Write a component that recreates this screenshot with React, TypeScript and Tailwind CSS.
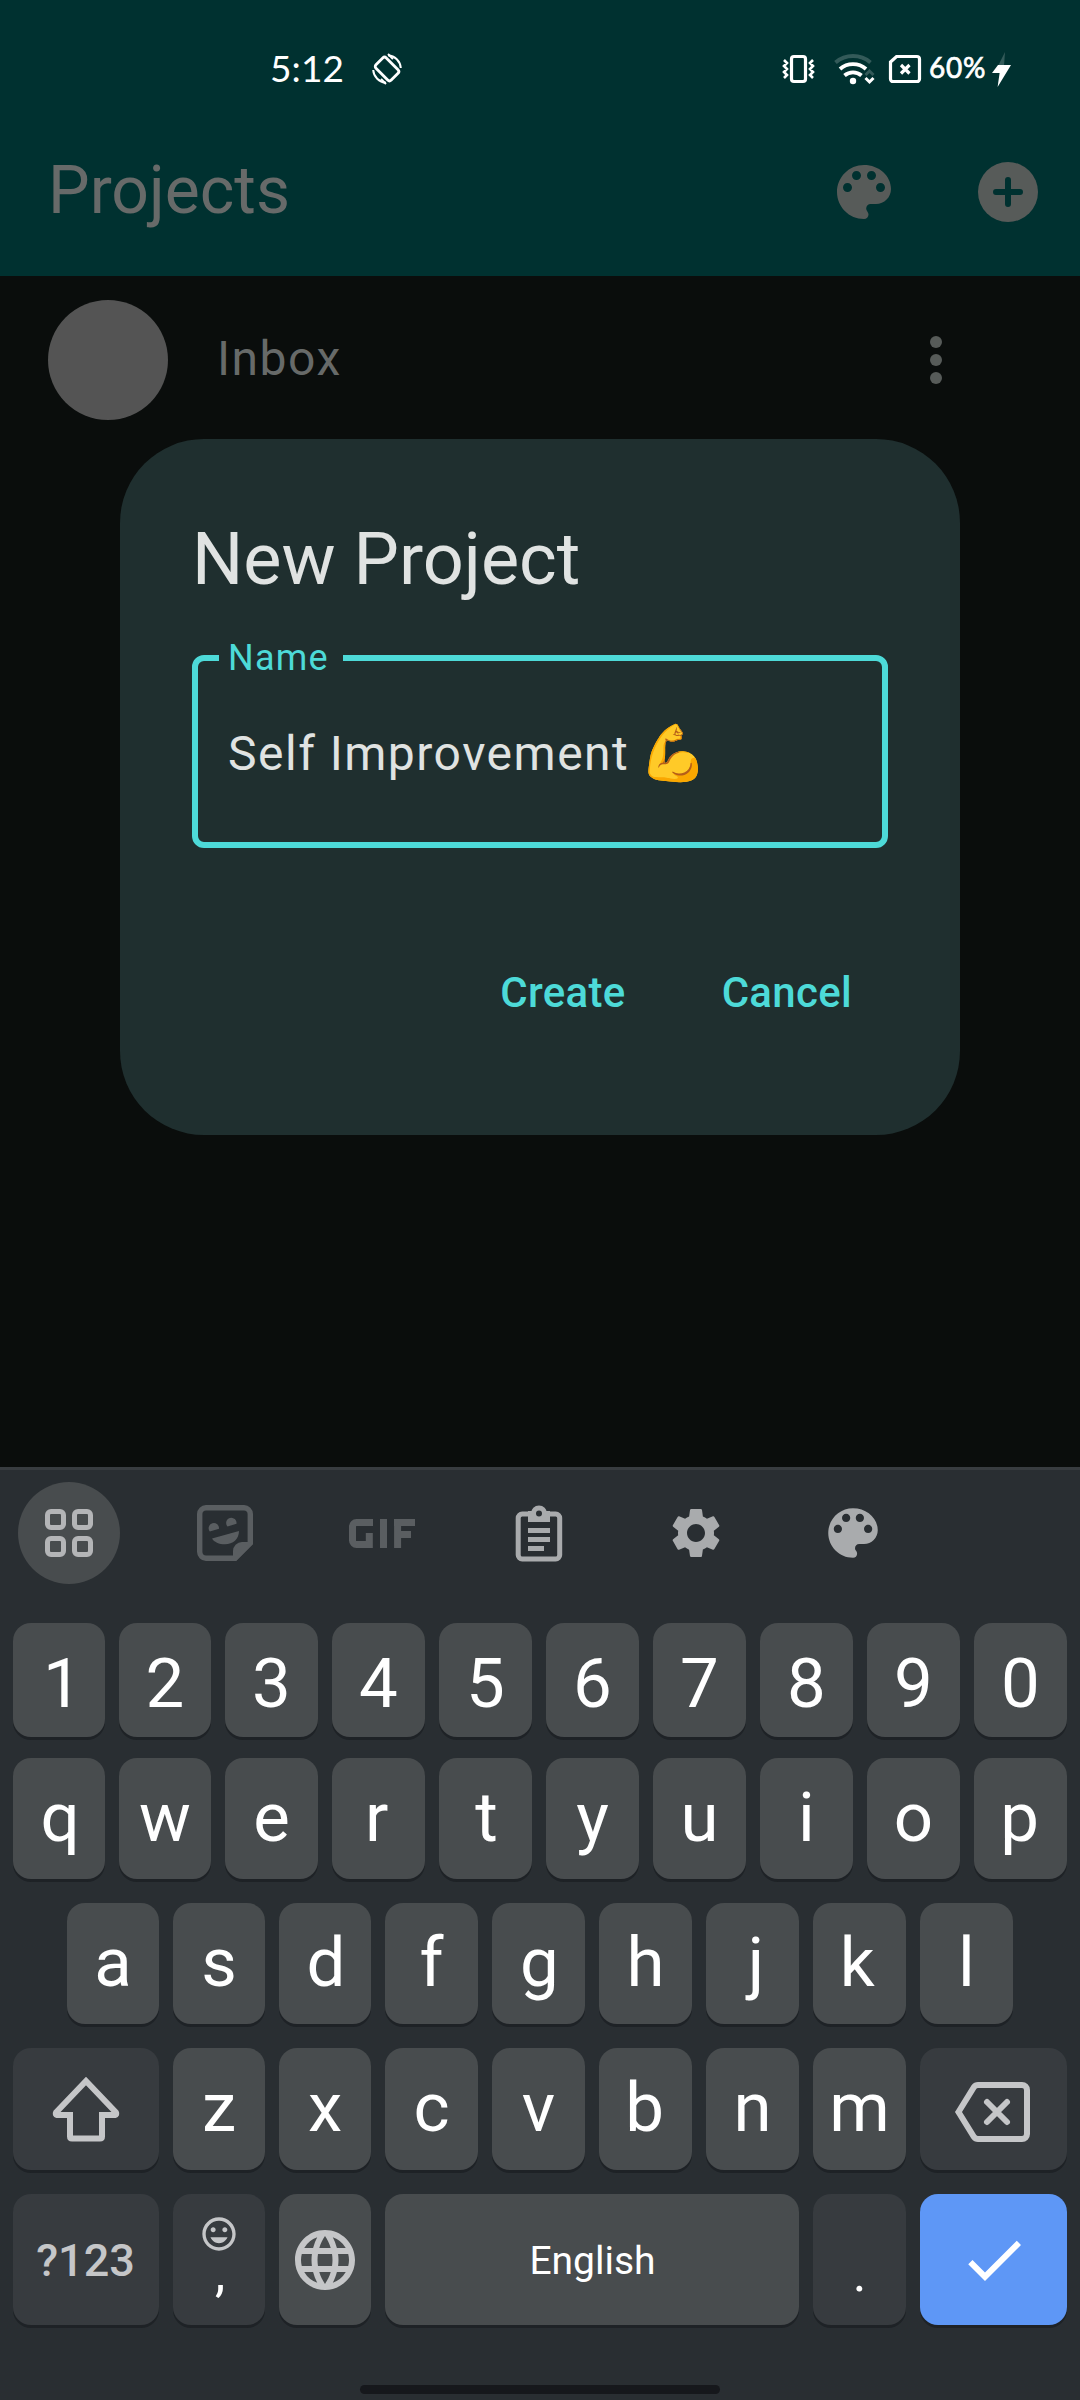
import React from "react";
import { MdSettings, MdLanguage, MdOutlineTagFaces, MdCheck } from "react-icons/md";

function Palette({ className }: { className: string }) {
  return (
    <svg className={className} viewBox="0 0 24 24" fill="currentColor">
      <path d="M12 3c-4.970 0-9 4.030-9 9s4.030 9 9 9c.83 0 1.500-.67 1.500-1.500 0-.39-.15-.74-.39-1.010-.23-.26-.38-.61-.38-.99 0-.83.67-1.500 1.500-1.500H16c2.760 0 5-2.240 5-5 0-4.420-4.030-8-9-8zm-5.500 9c-.83 0-1.500-.67-1.500-1.500S5.670 9 6.500 9 8 9.670 8 10.500 7.330 12 6.500 12zm3-4C8.670 8 8 7.330 8 6.500S8.670 5 9.500 5s1.500.67 1.500 1.500S10.330 8 9.500 8zm5 0c-.83 0-1.500-.67-1.500-1.500S13.670 5 14.500 5s1.500.67 1.500 1.500S15.330 8 14.500 8zm3 4c-.83 0-1.500-.67-1.500-1.500S16.670 9 17.500 9s1.500.67 1.500 1.500-.67 1.500-1.500 1.500z" />
    </svg>
  );
}

function StatusBar() {
  return (
    <div className="relative h-[138px] w-full text-white">
      <span className="absolute left-[270px] top-[45px] text-[37px] leading-[46px] tracking-[0.100px] font-[Lato,sans-serif]">5:12</span>
      <svg className="absolute left-[371px] top-[53px]" width="32" height="32" viewBox="0 0 32 32" fill="none" stroke="currentColor" strokeWidth="2.800">
        <rect x="8.700" y="5.200" width="14.600" height="21.600" rx="2.500" transform="rotate(-45 16 16)" />
        <path d="M17 2.200A13.800 13.800 0 0 1 29.800 15M15 29.800A13.800 13.800 0 0 1 2.200 17" strokeWidth="2" />
        <path d="M17 1l5 5M15 31l-5-5" strokeWidth="2" />
      </svg>
      <svg className="absolute left-[780px] top-[50px]" width="236" height="40" viewBox="780 50 236 40" fill="none" stroke="currentColor">
        <rect x="791.500" y="56.500" width="14" height="25" rx="2.500" strokeWidth="3.200" />
        <path d="M784 60l3 3-3 3 3 3-3 3 3 3-3 3M813 60l-3 3 3 3-3 3 3 3-3 3 3 3" strokeWidth="2.600" />
        <path d="M835.500 62.500a27 27 0 0 1 35 0" strokeWidth="4" opacity="0.200" />
        <path d="M840 69a19.500 19.500 0 0 1 26 0M844.500 75.500a13 13 0 0 1 17 0" strokeWidth="3.800" />
        <circle cx="853" cy="81" r="3.200" fill="currentColor" stroke="none" />
        <path d="M865.500 75l4-4 4 4" strokeWidth="3" opacity="0.200" />
        <path d="M865.500 78l4 4 4-4" strokeWidth="3" />
        <path d="M896.500 56.500H917a2.500 2.500 0 0 1 2.500 2.500V79a2.500 2.500 0 0 1-2.500 2.500H893a2.500 2.500 0 0 1-2.500-2.500V62z" strokeWidth="3.200" />
        <path d="M901 65l8.500 8.500M909.500 65L901 73.500" strokeWidth="3.200" />
        <path d="M1005 52l-7 14h6z" fill="currentColor" stroke="none" opacity="0.200" />
        <path d="M998 65H1011L997.600 87l2-14H992z" fill="currentColor" stroke="none" />
      </svg>
      <span className="absolute left-[929px] top-[49px] text-[28px] leading-[36px] tracking-[0.700px] font-[Lato,sans-serif] [-webkit-text-stroke:0.700px_white]">60%</span>
    </div>
  );
}

const KEY = "flex shrink-0 items-center justify-center rounded-[18px] shadow-[0_3px_0_#1e2226] ";
const LIGHT = "bg-[#484c4e] ";
const DARK = "bg-[#373b3f] ";

// Glyphs with uneven side bearings are nudged so that their ink is centred on the key.
const NUDGE: Record<string, number> = { "1": 3.5, q: 1.2, r: -1.9, t: 1, p: -0.8, d: 1, g: 0.9, j: 3.6, k: -2.3, b: -0.8 };

function LetterRow({ letters, narrow, height, pad }: { letters: string; narrow: number; height: string; pad: string }) {
  return (
    <>
      {letters.split("").map((c, i) => (
        <div key={c} className={KEY + LIGHT + height + (i < narrow ? " w-[92px]" : " w-[93px]")}>
          <span className={"text-[69px] leading-[80px] " + pad} style={{ transform: `translateX(${NUDGE[c] ?? 0}px)` }}>
            {c}
          </span>
        </div>
      ))}
    </>
  );
}

function Toolbar() {
  return (
    <div className="flex h-[126px] items-center pl-[18px]">
      <div className="flex size-[102px] items-center justify-center rounded-full bg-[#484c4e]">
        <div className="grid grid-cols-2 gap-[6px]">
          {[0, 1, 2, 3].map((i) => (
            <div key={i} className="size-[21px] rounded-[6px] border-[5px] border-[#b4b5b7]" />
          ))}
        </div>
      </div>
      <svg className="ml-[77px]" width="56" height="56" viewBox="0 0 56 56" fill="#5a5e61">
        <path d="M38 53.300H9a6.500 6.500 0 0 1-6.300-6.500V9A6.500 6.500 0 0 1 9 2.700H47A6.500 6.500 0 0 1 53.300 9V38z" fill="none" stroke="#5a5e61" strokeWidth="5.400" />
        <path d="M36 56V46a9 9 0 0 1 9-9h11v2L39 56z" />
        <path d="M12.800 26.500A5.200 5.200 0 1 1 22 23.800zM30.500 21.500A5.200 5.200 0 1 1 39.500 18.800zM15 33.500L42 26C42 34 36 39.300 28 39.300 22 39.300 17 37 15 33.500z" />
      </svg>
      <svg className="ml-[96px]" width="66" height="29" viewBox="0 0 66 29" fill="none" stroke="#5a5e61" strokeWidth="7">
        <path d="M24 3.500H7.500a4 4 0 0 0-4 4V21.500a4 4 0 0 0 4 4H20.300V14M34.500 0V29M48.600 29V0M45 3.500H66M48.600 15.500H62" />
      </svg>
      <svg className="ml-[100px]" width="48" height="57" viewBox="0 0 48 57" fill="none" stroke="#a9abad" strokeWidth="5">
        <rect x="3.200" y="9" width="41.500" height="45" rx="4" />
        <path d="M13 11.500h22" strokeWidth="11" />
        <circle cx="24" cy="8.500" r="5.500" fill="#292e32" />
        <path d="M13 25.500h22M13 34.500h22M13 43.500h16" />
      </svg>
      <MdSettings className="ml-[103px] size-[60px] text-[#a9abad]" />
      <Palette className="ml-[94px] size-[66px] text-[#a9abad]" />
    </div>
  );
}

function Keyboard() {
  return (
    <div className="flex h-[933px] flex-col border-t-[3px] border-[#383c40] bg-[#292e32] text-white">
      <Toolbar />
      <div className="mt-[27px] flex gap-[14px] pl-[13px]">
        <LetterRow letters="1234567890" narrow={2} height="h-[114px]" pad="pt-[7px]" />
      </div>
      <div className="mt-[21px] flex gap-[14px] pl-[13px]">
        <LetterRow letters="qwertyuiop" narrow={2} height="h-[121px]" pad="pb-[2px]" />
      </div>
      <div className="mt-[24px] flex gap-[14px] pl-[67px]">
        <LetterRow letters="asdfghjkl" narrow={3} height="h-[121px]" pad="pb-[2px]" />
      </div>
      <div className="mt-[24px] flex gap-[14px] pl-[13px]">
        <div className={KEY + DARK + "h-[122px] w-[146px]"}>
          <svg width="70" height="68" viewBox="0 0 70 68" fill="none" stroke="#c5c6c8" strokeWidth="6">
            <path d="M35 6L5 37.500Q4 39.500 6 40H19V61.500q0 2 2 2H49q2 0 2-2V40H64q2-.5 1-2.500z" />
          </svg>
        </div>
        <LetterRow letters="zxcvbnm" narrow={2} height="h-[122px]" pad="pb-[3px]" />
        <div className={KEY + DARK + "h-[122px] w-[147px]"}>
          <svg className="-ml-[4px] mt-[6px]" width="78" height="60" viewBox="0 0 78 60" fill="none" stroke="#c5c6c8" strokeWidth="6">
            <path d="M5.500 30L21 5Q22.500 3 25 3H69a5 5 0 0 1 5 5V52a5 5 0 0 1-5 5H25Q22.500 57 21 55z" />
            <path d="M34 20L54 40M54 20L34 40" strokeLinecap="round" />
          </svg>
        </div>
      </div>
      <div className="mt-[24px] flex gap-[14px] pl-[13px]">
        <div className={KEY + DARK + "h-[131px] w-[146px] pt-[3px] pr-[1px] text-[45px] font-medium text-[#c5c6c8]"}>?123</div>
        <div className={KEY + DARK + "h-[131px] w-[92px] flex-col"}>
          <MdOutlineTagFaces className="mt-[8px] size-[40px] text-[#c5c6c8]" />
          <span className="mb-[10px] -mt-[10px] pl-[2px] text-[52px] leading-[60px]">,</span>
        </div>
        <div className={KEY + LIGHT + "h-[131px] w-[92px]"}>
          <MdLanguage className="size-[72px] text-[#c5c6c8]" />
        </div>
        <div className={KEY + LIGHT + "h-[131px] w-[414px] pl-[1px] pt-[3px] text-[39px]"}>English</div>
        <div className={KEY + DARK + "h-[131px] w-[93px]"}>
          <span className="mt-[28px] text-[52px] leading-[60px]">.</span>
        </div>
        <div className={KEY + "h-[131px] w-[147px] bg-[#5e97f6]"}>
          <MdCheck className="size-[72px]" />
        </div>
      </div>
      <div className="mx-auto mt-[60px] h-[9px] w-[360px] rounded-full bg-[#16181c]" />
    </div>
  );
}

function Dialog() {
  return (
    <div className="absolute left-[120px] top-[439px] h-[696px] w-[840px] rounded-[84px] bg-[#1f2f2f] px-[72px] pt-[79px]">
      <h2 className="text-[72px] leading-[84px] text-[#e0e3e2]">New Project</h2>
      <div className="relative mt-[53px] flex h-[193px] items-center rounded-[12px] border-[6px] border-[#4ddad8] pl-[30px] text-[48px] tracking-[1.500px] text-[#e0e3e2]">
        <span className="absolute -top-[24px] left-[21px] w-[124px] bg-[#1f2f2f] pl-[9px] text-[36px] leading-[42px] tracking-[1.200px] text-[#4ddad8]">Name</span>
        <span className="whitespace-pre pt-[5px] leading-[56px]">Self Improvement </span>
        <span className="-ml-[4px] pt-[3px] text-[55px] leading-[56px] tracking-normal">💪</span>
      </div>
      <div className="mt-[105px] flex justify-end gap-[96px] pr-[36px] text-[42px] font-medium leading-[80px] tracking-[0.300px] text-[#4ddad8]">
        <span>Create</span>
        <span>Cancel</span>
      </div>
    </div>
  );
}

export default function App() {
  return (
    <div className="relative flex h-[2400px] w-[1080px] flex-col overflow-hidden bg-[#0a0d0c] font-[Roboto,sans-serif]">
      <header className="h-[276px] bg-[#003130]">
        <StatusBar />
        <div className="flex h-[108px] items-center pl-[48px] pr-[36px] text-[#575b59]">
          <h1 className="grow pb-[2px] text-[66px] leading-[78px] text-[#676a69]">Projects</h1>
          <Palette className="size-[72px]" />
          <svg className="ml-[72px]" width="72" height="72" viewBox="0 0 72 72">
            <circle cx="36" cy="36" r="30" fill="currentColor" />
            <path d="M36 24V48M24 36H48" stroke="#003130" strokeWidth="6" strokeLinecap="round" />
          </svg>
        </div>
      </header>
      <div className="flex h-[168px] shrink-0 items-center pl-[48px] pr-[138px]">
        <div className="size-[120px] rounded-full bg-[#545454]" />
        <span className="ml-[49px] grow pb-[3px] text-[48px] leading-[56px] tracking-[1.500px] text-[#676a69]">Inbox</span>
        <div className="flex flex-col gap-[6px]">
          <div className="size-[12px] rounded-full bg-[#575b59]" />
          <div className="size-[12px] rounded-full bg-[#575b59]" />
          <div className="size-[12px] rounded-full bg-[#575b59]" />
        </div>
      </div>
      <div className="grow" />
      <Keyboard />
      <Dialog />
    </div>
  );
}
